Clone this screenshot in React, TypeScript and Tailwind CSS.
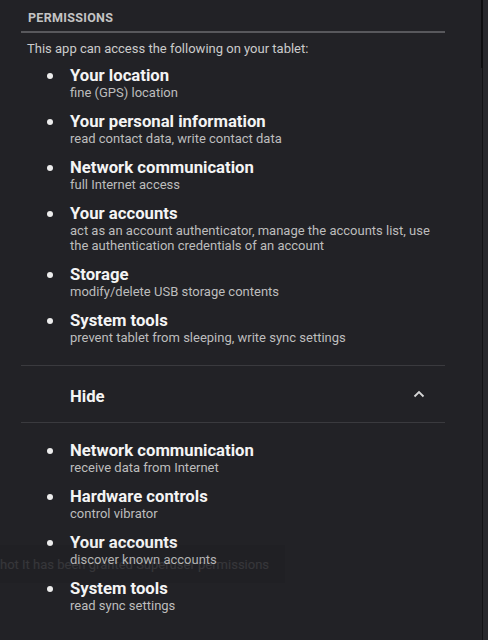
import React from 'react'

type Permission = {
  title: string
  desc: string
}

const granted: Permission[] = [
  { title: 'Your location', desc: 'fine (GPS) location' },
  {
    title: 'Your personal information',
    desc: 'read contact data, write contact data',
  },
  { title: 'Network communication', desc: 'full Internet access' },
  {
    title: 'Your accounts',
    desc: 'act as an account authenticator, manage the accounts list, use the authentication credentials of an account',
  },
  { title: 'Storage', desc: 'modify/delete USB storage contents' },
  {
    title: 'System tools',
    desc: 'prevent tablet from sleeping, write sync settings',
  },
]

const hidden: Permission[] = [
  { title: 'Network communication', desc: 'receive data from Internet' },
  { title: 'Hardware controls', desc: 'control vibrator' },
  { title: 'Your accounts', desc: 'discover known accounts' },
  { title: 'System tools', desc: 'read sync settings' },
]

const PermissionItem: React.FC<{ item: Permission }> = ({ item }) => (
  <li className="flex">
    <div className="w-[49px] shrink-0">
      <span className="block w-[6px] h-[6px] mt-[6px] ml-[26px] rounded-full bg-[#ececec]" />
    </div>
    <div className="flex-1 pr-[6px]">
      <div className="text-[16.7px] leading-[18px] font-bold text-[#f4f4f4]">
        {item.title}
      </div>
      <div className="text-[13px] leading-[15px] text-[#bdbdbd]">
        {item.desc}
      </div>
    </div>
  </li>
)

export default function App() {
  return (
    <div
      className="relative w-[488px] h-[640px] overflow-hidden bg-[#222226] flex"
      style={{ fontFamily: 'Roboto, "Noto Sans", sans-serif' }}
    >
      <div className="w-[482px] shrink-0">
        <div className="ml-[21px] w-[424px]">
          {/* section header */}
          <div className="pt-[10px] pb-[5px] pl-[7px] border-b-2 border-[#58585c] text-[12.5px] leading-[16px] font-bold text-[#c4c4c4] tracking-[0.3px]">
            PERMISSIONS
          </div>

          <p className="mt-[8px] pl-[6px] text-[13px] leading-[15px] text-[#cbcbcb]">
            This app can access the following on your tablet:
          </p>

          <ul className="mt-[11px] flex flex-col gap-[13px]">
            {granted.map((p, i) => (
              <PermissionItem key={`g-${i}`} item={p} />
            ))}
          </ul>

          <div className="mt-[20px] border-t border-[#3a3a3e]" />

          {/* collapse row */}
          <div className="h-[56px] flex items-center pl-[49px] pr-[20px] pt-[5px]">
            <span className="flex-1 text-[16.7px] leading-[18px] font-bold text-[#f4f4f4]">
              Hide
            </span>
            <svg width="12" height="8" viewBox="0 0 12 8" className="-mt-[5px]">
              <path
                d="M1.5 6.5 L6 2 L10.5 6.5"
                fill="none"
                stroke="#d6d6d6"
                strokeWidth="1.8"
              />
            </svg>
          </div>

          <div className="border-t border-[#3a3a3e]" />

          <ul className="mt-[19px] flex flex-col gap-[13px]">
            {hidden.map((p, i) => (
              <PermissionItem key={`h-${i}`} item={p} />
            ))}
          </ul>
        </div>
      </div>

      {/* scrollbar edge */}
      <div className="relative w-[1px] bg-[#131315]" />
      <div className="flex-1 bg-[#28282c]" />
      <div className="absolute left-[481px] top-0 w-[2px] h-[68px] bg-[#0e0e10]" />

      {/* fading toast */}
      <div className="absolute left-0 top-[545px] w-[285px] h-[38px] bg-black/5 flex items-center">
        <span className="text-[13px] leading-[16px] text-white/10 whitespace-nowrap pt-[2px]">
          hot It has been granted Superuser permissions
        </span>
      </div>
    </div>
  )
}
